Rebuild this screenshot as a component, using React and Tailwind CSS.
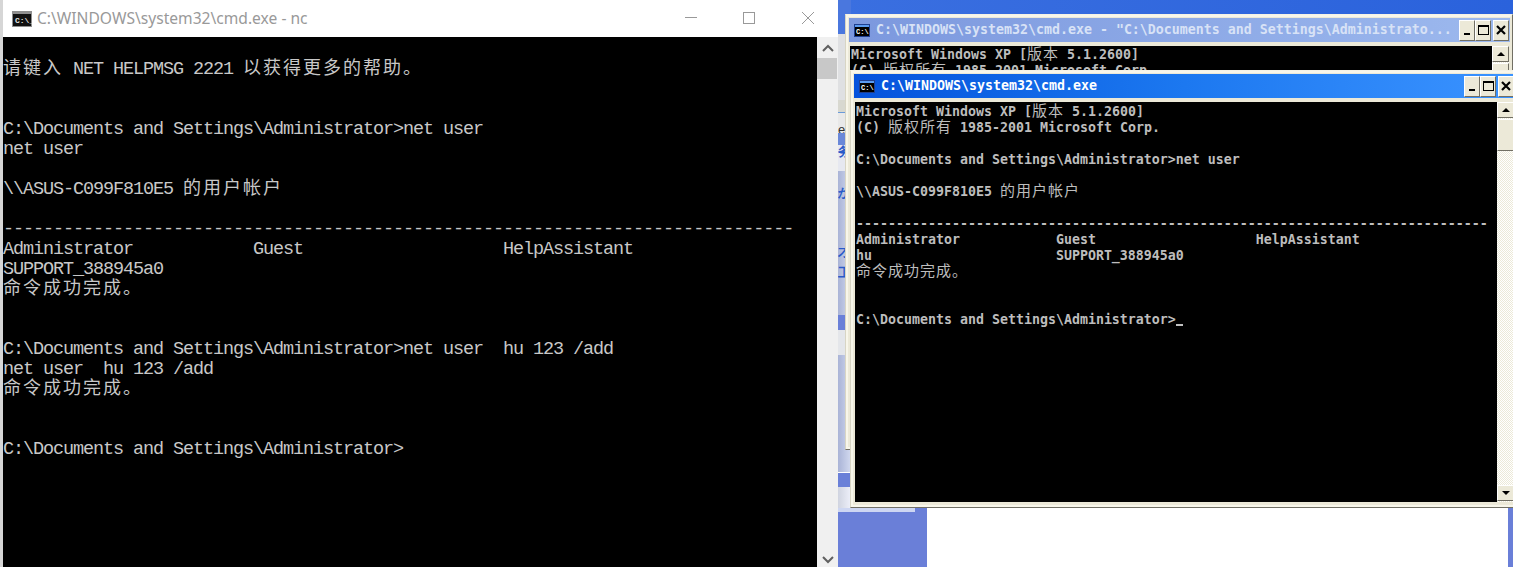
const Cjk = ({ children, big }) => (
  <span
    className={
      big
        ? "font-['Noto_Sans_CJK_SC'] font-normal text-[18px] tracking-[2px] leading-[0]"
        : "font-['Noto_Sans_CJK_SC'] font-normal text-[15px] tracking-[1px] leading-[0]"
    }
  >
    {children}
  </span>
);

const DASHES = '-'.repeat(79);

const modernLines = [
  <>
    <Cjk big>请键入</Cjk> NET HELPMSG 2221 <Cjk big>以获得更多的帮助。</Cjk>
  </>,
  '',
  '',
  'C:\\Documents and Settings\\Administrator>net user',
  'net user',
  '',
  <>
    \\ASUS-C099F810E5 <Cjk big>的用户帐户</Cjk>
  </>,
  '',
  DASHES,
  'Administrator            Guest                    HelpAssistant',
  'SUPPORT_388945a0',
  <Cjk big>命令成功完成。</Cjk>,
  '',
  '',
  'C:\\Documents and Settings\\Administrator>net user  hu 123 /add',
  'net user  hu 123 /add',
  <Cjk big>命令成功完成。</Cjk>,
  '',
  '',
  'C:\\Documents and Settings\\Administrator>',
];

const xpHeader = [
  <>
    Microsoft Windows XP [<Cjk>版本</Cjk> 5.1.2600]
  </>,
  <>
    (C) <Cjk>版权所有</Cjk> 1985-2001 Microsoft Corp.
  </>,
];

const xpLines = [
  ...xpHeader,
  '',
  'C:\\Documents and Settings\\Administrator>net user',
  '',
  <>
    \\ASUS-C099F810E5 <Cjk>的用户帐户</Cjk>
  </>,
  '',
  '-'.repeat(79),
  'Administrator            Guest                    HelpAssistant',
  'hu                       SUPPORT_388945a0',
  <Cjk>命令成功完成。</Cjk>,
  '',
  '',
  <>
    C:\Documents and Settings\Administrator&gt;
    <span className="inline-block w-[7px] h-[2px] bg-[#c0c0c0] translate-y-[2px]" />
  </>,
];

const CmdIcon = ({ modern }) =>
  modern ? (
    <svg width="20" height="16" viewBox="0 0 20 16">
      <rect x="0" y="0" width="20" height="16" fill="#8f8f8f" />
      <rect x="1" y="3" width="18" height="12" fill="#111" />
      <text x="3" y="12" fontSize="8" fontWeight="700" fontFamily="Liberation Mono" fill="#e8e8e8">
        C:\_
      </text>
    </svg>
  ) : (
    <svg width="16" height="13" viewBox="0 0 16 13">
      <rect x="0" y="0" width="16" height="13" fill="#1f3f8f" />
      <rect x="1" y="1" width="14" height="2" fill="#5b9bf0" />
      <rect x="1" y="3" width="14" height="9" fill="#000" />
      <text x="2" y="10" fontSize="7" fontWeight="700" fontFamily="Liberation Mono" fill="#fff">
        C:\
      </text>
    </svg>
  );

const XpButton = ({ className = '', children }) => (
  <div
    className={`w-[16px] h-[21px] bg-[#ece9d8] border border-t-white border-l-white border-r-[#716f64] border-b-[#716f64] flex items-center justify-center ${className}`}
  >
    {children}
  </div>
);

const XpWindow = ({ className, title, titleClass, barClass, lines, textClass }) => (
  <div
    className={`absolute w-[668px] flex flex-col bg-[#ece9d8] border border-t-[#f4f2e6] border-l-[#d8d5c4] border-r-[#716f64] border-b-[#716f64] ${className}`}
  >
    <div className="flex-1 min-h-0 flex flex-col border-2 border-l-[#f8f6ea] border-t-[#f8f6ea] border-r-[#ece9d8] border-b-[#f8f6ea] pl-px">
      <div className={`h-[24px] mt-px flex items-center pl-[5px] pr-px shrink-0 ${barClass}`}>
        <CmdIcon />
        <span
          className={`ml-[6px] font-['DejaVu_Sans_Mono'] font-bold text-[13.29px] leading-none whitespace-pre ${titleClass}`}
        >
          {title}
        </span>
        <div className="ml-auto flex items-center">
          <XpButton>
            <div className="w-[6px] h-[2px] bg-black mt-[7px]" />
          </XpButton>
          <XpButton>
            <div className="w-[11px] h-[10px] border border-t-2 border-black" />
          </XpButton>
          <XpButton className="ml-[2px]">
            <svg width="10" height="10" viewBox="0 0 10 10">
              <path d="M1 1 L9 9 M9 1 L1 9" stroke="#000" strokeWidth="2.2" />
            </svg>
          </XpButton>
        </div>
      </div>
      <div className="flex-1 min-h-0 flex mt-[4px] mb-[3px] mr-[1px] ml-px overflow-hidden">
        <div
          className={`flex-1 bg-black overflow-hidden whitespace-pre font-['DejaVu_Sans_Mono'] font-bold text-[13.29px] leading-[16px] text-[#bdbdbd] pl-px ${textClass}`}
        >
          {lines.map((line, i) => (
            <div key={i} className="h-4">
              {line}
            </div>
          ))}
        </div>
        <div className="w-[17px] shrink-0 flex flex-col bg-[repeating-conic-gradient(#ece9d8_0_25%,#ffffff_0_50%)] bg-[length:2px_2px]">
          <div className="h-[16px] bg-[#ece9d8] border border-t-white border-l-white border-r-[#716f64] border-b-[#716f64] flex items-center justify-center">
            <div className="w-0 h-0 border-x-[4px] border-x-transparent border-b-[4px] border-b-black" />
          </div>
          <div className="h-[32px] mt-px bg-[#ece9d8] border border-t-white border-l-white border-r-[#716f64] border-b-[#716f64]" />
          <div className="mt-auto h-[16px] mb-px bg-[#ece9d8] border border-t-white border-l-white border-r-[#716f64] border-b-[#716f64] flex items-center justify-center">
            <div className="w-0 h-0 border-x-[4px] border-x-transparent border-t-[4px] border-t-black" />
          </div>
        </div>
      </div>
    </div>
  </div>
);

const ChevronMark = ({ up }) => (
  <svg width="12" height="8" viewBox="0 0 12 8">
    <path d={up ? 'M1 7 L6 2 L11 7' : 'M1 1 L6 6 L11 1'} fill="none" stroke="#606060" strokeWidth="2" />
  </svg>
);

export default function App() {
  return (
    <div className="relative w-[1513px] h-[567px] overflow-hidden flex bg-[#6a7fd8]">
      {/* modern console */}
      <div className="w-[838px] shrink-0 h-full flex flex-col bg-white border-l-[3px] border-[#d6d6d6]">
        <div className="h-[37px] shrink-0 flex items-center pl-[9px]">
          <CmdIcon modern />
          <span className="ml-[5px] font-['Noto_Sans'] text-[15.6px] text-[#999999] whitespace-pre">
            C:\WINDOWS\system32\cmd.exe - nc
          </span>
          <svg className="ml-auto mb-px" width="129" height="14" viewBox="0 0 129 14" stroke="#999999" fill="none">
            <path d="M0 6.5 H12" />
            <rect x="58.5" y="1.5" width="11" height="11" />
            <path d="M117 1 L129 13 M129 1 L117 13" />
          </svg>
          <div className="w-[24px] shrink-0" />
        </div>
        <div className="flex-1 min-h-0 flex">
          <div className="w-[814px] bg-black pt-[23px] overflow-hidden whitespace-pre font-['Liberation_Mono'] text-[18.5px] tracking-[-1.1px] leading-5 text-[#c8c8c8]">
            {modernLines.map((line, i) => (
              <div key={i} className="h-5">
                {line}
              </div>
            ))}
          </div>
          <div className="flex-1 bg-[#f0f0f0] flex flex-col">
            <div className="h-[21px] flex items-center justify-center">
              <ChevronMark up />
            </div>
            <div className="h-[21px] bg-[#c8c8c8] mr-px" />
            <div className="mt-auto h-[15px] flex items-center justify-center">
              <ChevronMark />
            </div>
          </div>
        </div>
      </div>

      {/* desktop behind the XP windows */}
      <div className="flex-1 relative">
        <div className="absolute inset-x-0 top-0 h-[14px] bg-gradient-to-r from-[#3a6fe0] to-[#2a62dc]" />
        <div className="absolute left-0 top-0 w-[13px] h-[512px] overflow-hidden flex flex-col bg-[#c3cdea] text-[13px] leading-none font-['Liberation_Sans'] font-bold text-[#2a5bc8]">
          <div className="h-[34px] bg-[#4a77de]" />
          <div className="h-[66px] bg-[#dfe0e2]" />
          <div className="h-[12px] bg-[#d8d8d0]" />
          <div className="h-[21px] bg-[#e8e8e8] border-t border-[#6a9ad8] text-[#333333] font-normal pt-[10px]">e</div>
          <div className="h-[12px] bg-[#6a88d8]" />
          <div className="h-[26px] bg-[#e6e8f0]">务</div>
          <div className="h-[144px] bg-gradient-to-r from-[#a9b3d6] to-[#d3daf0]">
            <div className="h-[14px]" />
            <div className="mt-px">か</div>
            <div className="mt-[46px]">才</div>
            <div className="mt-[8px]">工</div>
          </div>
          <div className="h-[15px] bg-[#6a80d8]" />
          <div className="h-[25px] bg-[#e4e6ea]" />
          <div className="h-[117px] bg-gradient-to-r from-[#a9b3d6] to-[#d3daf0]" />
          <div className="h-[15px] bg-[#6a80d8] border-t border-white" />
          <div className="h-[25px] bg-gradient-to-r from-[#d0d4e0] to-[#eef0fa]" />
        </div>
        <div className="absolute left-0 top-[508px] w-[77px] h-[4px] bg-[#cdd6f2]" />
        <div className="absolute left-[89px] top-[508px] w-[581px] h-[59px] bg-white" />

        <XpWindow
          className="left-[7px] top-[14px] h-[436px]"
          barClass="bg-gradient-to-r from-[#7c98de] to-[#9db9ee]"
          titleClass="text-[#d8e2f6]"
          title={'C:\\WINDOWS\\system32\\cmd.exe - "C:\\Documents and Settings\\Administrato...'}
          lines={xpHeader}
          textClass="pt-px"
        />
        <XpWindow
          className="left-[12px] top-[70px] h-[438px]"
          barClass="bg-gradient-to-r from-[#0653dc] via-[#1c78f0] to-[#3a93ff]"
          titleClass="text-white"
          title={'C:\\WINDOWS\\system32\\cmd.exe'}
          lines={xpLines}
          textClass="pt-[2px]"
        />
      </div>
    </div>
  );
}
